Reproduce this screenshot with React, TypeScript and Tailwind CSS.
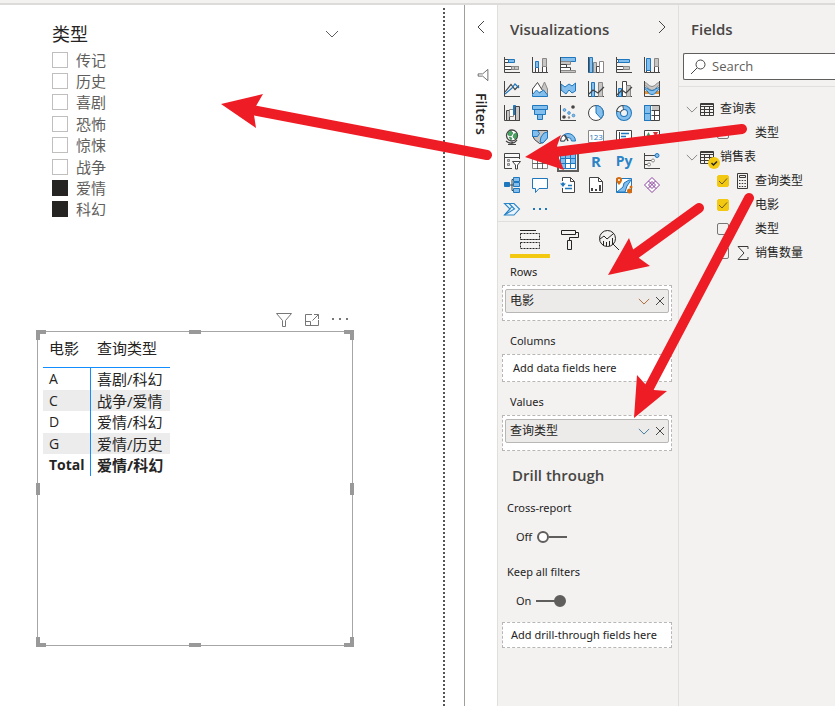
import { useId, useState } from "react";
import type { ReactNode } from "react";

const INK = "#444444";
const BLUE = "#1f77bd";
const SKY = "#83beec";
const GRAY = "#c8c6c4";
const MID = "#8a8886";

const axes = <path d="M.5 0v15.5H16" stroke={INK} fill="none" />;

const icons: { name: string; art: ReactNode; selected?: boolean }[] = [
  { name: "Stacked bar chart", art: <>{axes}<path d="M.5 2.5h5v3h-5z" fill="#fff" stroke={INK} /><path d="M4.500 2.500h6v3h-6z" fill={SKY} stroke={BLUE} /><path d="M.5 9.500h10v3H.5z" fill="#fff" stroke={INK} /><path d="M10.500 9.500h4v3h-4zM7.500 9.500h7v3h-7z" fill={GRAY} stroke={MID} /></> },
  { name: "Stacked column chart", art: <>{axes}<path d="M3.500 10.500h3v5h-3z" fill="#fff" stroke={INK} /><path d="M3.500 4.500h3v6h-3z" fill={SKY} stroke={BLUE} /><path d="M10.500 9.500h4v6h-4z" fill="#fff" stroke={INK} /><path d="M10.500 1.500h4v8h-4z" fill={GRAY} stroke={MID} /></> },
  { name: "Clustered bar chart", art: <><path d="M.5.5h15v4H.5z" fill={SKY} stroke={BLUE} /><path d="M.5 4.500h10v3H.5z" fill={GRAY} stroke={MID} /><path d="M.5 7.500h6v3h-6z" fill="#fff" stroke={INK} /><path d="M.5 10.500h10v3H.5z" fill="#fff" stroke={INK} /><path d="M.5 13.500h15v2H.5z" fill={GRAY} stroke={MID} /><path d="M.5 0v16" stroke={INK} /></> },
  { name: "Clustered column chart", art: <>{axes}<path d="M1.500.5h3v15h-3z" fill={SKY} stroke={BLUE} /><path d="M5.500 5.500h3v10h-3z" fill={GRAY} stroke={MID} /><path d="M8.500 9.500h3v6h-3z" fill="#fff" stroke={INK} /><path d="M11.500 4.500h4v11h-4z" fill="#fff" stroke={MID} /></> },
  { name: "100% stacked bar chart", art: <>{axes}<path d="M.5 2.500h2v3h-2zM.5 9.500h7v3h-7z" fill="#fff" stroke={INK} /><path d="M2.500 2.500h11v3h-11z" fill={SKY} stroke={BLUE} /><path d="M7.500 9.500h6v3h-6z" fill={GRAY} stroke={MID} /></> },
  { name: "100% stacked column chart", art: <>{axes}<path d="M2.500 12.500h4v3h-4zM10.500 9.500h4v6h-4z" fill="#fff" stroke={INK} /><path d="M2.500 1.500h4v12h-4z" fill={SKY} stroke={BLUE} /><path d="M10.500 1.500h4v8h-4z" fill={GRAY} stroke={MID} /></> },
  { name: "Line chart", art: <>{axes}<g fill="none" strokeWidth="1.2"><path d="M1 11 7 3.500l4 5 4-4" stroke={INK} /><path d="M1 13l7-6 3-4 4 4" stroke={BLUE} /></g></> },
  { name: "Area chart", art: <><path d="M7 13 12.500 1l3 7v7z" fill={GRAY} stroke={MID} /><path d="M.5 13V8l5-6.500 5 8" fill="#fff" stroke={INK} /><path d="M.5 15.500v-2l4-4.500 3 3 4-3 4 5v1.500z" fill={SKY} stroke={BLUE} /></> },
  { name: "Stacked area chart", art: <><path d="M1 3l4 3 4-3 3 2 3.500-3v8L12 12l-3-3-3 4-5-4z" fill={SKY} stroke={BLUE} />{axes}</> },
  { name: "Line and stacked column chart", art: <>{axes}<path d="M3.500 1.500h3v14h-3z" fill={SKY} stroke={BLUE} /><path d="M10.500 1.500h4v14h-4z" fill={GRAY} stroke={MID} /><path d="M1 13l4-4 5 3 6-6" fill="none" stroke={INK} strokeWidth="1.2" /></> },
  { name: "Line and clustered column chart", art: <>{axes}<path d="M2.500 7.500h3v8h-3z" fill={SKY} stroke={BLUE} /><path d="M6.500.5h4v15h-4z" fill="#fff" stroke={INK} /><path d="M10.500 4.500h4v11h-4z" fill={GRAY} stroke={MID} /><path d="M1 14l5-5 4 3 6-6" fill="none" stroke={INK} strokeWidth="1.2" /></> },
  { name: "Ribbon chart", art: <><path d="M1 11.500h4l3-2 3 2h4" fill="none" stroke="#e8912d" strokeWidth="3" /><path d="M.5 1.500c3 0 4 4 7.500 4s4-4 7.500-4v3c-3 0-4 5-7.500 5s-4-5-7.500-5z" fill={GRAY} stroke={MID} /><path d="M.5 6.500c3 0 4 3 7.500 3s4-3 7.500-3v2c-3 0-3 5-7.500 5s-4-5-7.500-5z" fill={SKY} stroke={BLUE} /><path d="M.5 0v15.500h15V0" fill="none" stroke={INK} /></> },
  { name: "Waterfall chart", art: <>{axes}<path d="M2.500 5.500h3v10h-3z" fill={GRAY} stroke={INK} /><path d="M5.500 4.500h4v7h-4z" fill="#fff" stroke={MID} /><path d="M9.500.5h2v9h-2z" fill={BLUE} stroke={BLUE} /><path d="M11.500 1.500h4v14h-4z" fill={GRAY} stroke={INK} /></> },
  { name: "Funnel", art: <g fill={SKY} stroke={BLUE}><path d="M.5.5h15v4H.5zM2.500 4.500h11v5h-11zM5.500 9.500h5v5h-5z" /></g> },
  { name: "Scatter chart", art: <>{axes}<g fill={SKY} stroke={BLUE} strokeWidth=".6"><circle cx="4.500" cy="5" r="1.400" /><circle cx="9" cy="8" r="1.400" /><circle cx="13.500" cy="10.500" r="1.400" /></g><g fill={INK}><circle cx="13" cy="2" r="1.800" /><circle cx="4" cy="12" r="1.800" /></g><circle cx="9" cy="12.500" r="1.200" fill={MID} /></> },
  { name: "Pie chart", art: <><circle cx="8" cy="8" r="7.500" fill="#fff" stroke={INK} /><path d="M8 .5V8l5 5.500A7.500 7.500 0 0 0 8 .5z" fill={SKY} stroke={BLUE} /></> },
  { name: "Donut chart", art: <><circle cx="8" cy="8" r="5.500" fill="none" stroke={BLUE} strokeWidth="5" /><circle cx="8" cy="8" r="5.500" fill="none" stroke={SKY} strokeWidth="3" /><path d="M2.500 7a5.500 5.500 0 0 1 5-4.500" fill="none" stroke={INK} strokeWidth="5" /><path d="M2.700 6.200A5.500 5.500 0 0 1 6.700 2.600" fill="none" stroke="#fff" strokeWidth="3.200" /></> },
  { name: "Treemap", art: <><path d="M.5.5h15v15H.5z" fill="#fff" stroke={INK} /><path d="M.5.5h6v8h-6zM.5 8.500h6v7h-6z" fill={SKY} stroke={BLUE} /><path d="M8 1h7v4H8z" fill={GRAY} /><path d="M7.500 5.500h8M10.500 5.500v10M7.500 10.500h8" stroke={INK} /></> },
  { name: "Map", art: <><circle cx="8" cy="6.500" r="5.500" fill="#fff" stroke={INK} strokeWidth="1.300" /><path d="M4 3.500 7 2l2 2-2 3-3-1zM10 5l3-1v4l-2 2-2-2zM5 8l3 1-1 2z" fill="#4aa564" stroke="#2b7a43" strokeWidth=".6" /><path d="M2 12c4 3 8 3 11-1M8 13v2.500M4 15.500h8" fill="none" stroke={INK} strokeWidth="1.200" /></> },
  { name: "Filled map", art: <><path d="M.5 1.500h15v7l-4 5-4 1-5-4-2-4z" fill={GRAY} stroke={INK} /><path d="M.5 1.500h5l2 3-2 3h-5zM9 8l3-4 3.500-1v6L11 14l-3-1z" fill={SKY} stroke={BLUE} /></> },
  { name: "Gauge", art: <><path d="M.5 12a7.500 7.500 0 0 1 15 0h-4a3.500 3.500 0 0 0-7 0z" fill={SKY} stroke={BLUE} /><path d="M.5 12a7.500 7.500 0 0 1 3-6l3 3a4 4 0 0 0-2 3z" fill="#fff" stroke={INK} /><path d="m5 6 3 6" stroke={INK} strokeWidth="1.500" /></> },
  { name: "Card", art: <><path d="M.5 1.500h15v12H.5z" fill="#fff" stroke={MID} /><text x="8" y="11" textAnchor="middle" fontSize="8" fill={BLUE}>123</text></> },
  { name: "Multi-row card", art: <><path d="M.5 1.500h15v12H.5z" fill="#fff" stroke={INK} /><path d="M3.500 3v9" stroke={INK} /><path d="M5 4.500h8M5 7.500h5M5 10.500h7" stroke={BLUE} strokeWidth="1.500" /></> },
  { name: "KPI", art: <><path d="M.5 1.500h15v12H.5z" fill="#fff" stroke={INK} /><path d="m2 8 2.500-5L7 8z" fill="#3a9a5b" /><path d="m9 3 5 0-2.500 5z" fill="#d13438" /><path d="M3 11.500h10" stroke={MID} /></> },
  { name: "Slicer", art: <><path d="M.5.500h15v15H.5z" fill="#f8f8f8" /><path d="M15.500 6V.5H.5v15H8M0 4.500h16" fill="none" stroke={INK} /><path d="M3.500 6.500h2v2h-2zM3.500 10.500h2v2h-2z" fill={GRAY} stroke={MID} /><path d="M8.500 8.500h8l-3 3.500v4h-2v-4z" fill="#fff" stroke={INK} /></> },
  { name: "Table", art: <><path d="M.5.500h15v15H.5z" fill="#fff" stroke={MID} /><path d="M1 1h14v3H1z" fill={GRAY} /><path d="M.5 4.500h15M.5 10.500h15M5.500 4v12M10.500 4v12" stroke={INK} strokeWidth=".8" /></> },
  { name: "Matrix", selected: true, art: <><path d="M.5.500h15v15H.5z" fill="#fff" stroke={BLUE} /><path d="M1 1h14v4H1zM1 5h4v10H1zM11 5h4v6h-4z" fill={SKY} /><path d="M.5 5.500h15M.5 10.500h15M5.500 0v16M10.500 0v16" stroke={BLUE} /></> },
  { name: "R script visual", art: <text x="8" y="14" textAnchor="middle" fontSize="15" fontWeight="700" fill="#2b84c6">R</text> },
  { name: "Python visual", art: <text x="8" y="13" textAnchor="middle" fontSize="14" fontWeight="700" fill="#2b84c6">Py</text> },
  { name: "Key influencers", art: <><path d="M.5 0v15.500H16M1 2.500h11M1 7.500h8M1 11.500h3" stroke={INK} fill="none" /><circle cx="13" cy="2.500" r="2" fill={SKY} stroke={BLUE} /><circle cx="9" cy="7.500" r="1.500" fill="#fff" stroke={MID} /><circle cx="5" cy="11.500" r="1.500" fill="#fff" stroke={MID} /></> },
  { name: "Decomposition tree", art: <><path d="M5 8h4M9.500 2.500H8v11h2" fill="none" stroke={INK} /><path d="M.5 5.500h5v4h-5z" fill={BLUE} stroke={BLUE} /><path d="M9.500.500h6v4h-6zM9.500 5.500h6v4h-6zM9.500 11.500h6v4h-6z" fill={SKY} stroke={BLUE} /></> },
  { name: "Q&A", art: <path d="M.5 1.500h15v10H7l-3.500 4v-4h-3z" fill="#fff" stroke={BLUE} /> },
  { name: "Smart narrative", art: <><path d="M2.500 4V.500h8l4 4v11h-12V11" fill="#fff" stroke={INK} /><path d="M10.500.500v4h4" fill="none" stroke={INK} /><path d="M8 8.500h4M5 11.500h7" stroke={BLUE} strokeWidth="1.300" /><path d="M0 6.500h1.500L3 5l1.500 1.500H6L4.500 8 3 10 1.500 8z" fill={BLUE} /></> },
  { name: "Paginated report", art: <><path d="M1.500.500h9l4 4v11h-13z" fill="#fff" stroke={INK} /><path d="M10.500.500v4h4" fill="none" stroke={INK} /><path d="M4 11v3M8 12v2M12 8v6" stroke={INK} strokeWidth="2" /></> },
  { name: "ArcGIS map", art: <><path d="M.5 1.500h15v14H.5z" fill="#fff" stroke={BLUE} /><path d="M1 15 7 10l1-4 5-3h2l-4 6-2 6z" fill={SKY} stroke={BLUE} /><path d="M3 0a3 3 0 0 1 3 3c0 2-3 5-3 5S0 5 0 3a3 3 0 0 1 3-3z" fill="#d96b0b" /><circle cx="3" cy="3" r="1" fill="#fff" /><circle cx="13.500" cy="14" r="2.500" fill="#d96b0b" /><circle cx="15" cy="10" r="1.500" fill="#d96b0b" /></> },
  { name: "Power Apps", art: <g fill="none" stroke="#8b3f9e"><path d="M8 .5 15.500 8 8 15.500.5 8z" fill="#fff" /><path d="m4.500 4 7.500 7.500M11.500 4 4 11.500M8 4.500 4.500 8 8 11.500 11.500 8z" /></g> },
  { name: "Power Automate", art: <g fill="#e9f4fc" stroke="#2b84c6" strokeWidth="1.100"><path d="M.5 2.500h9.500l5.500 5.500-5.500 6H.5L6 8z" /><path d="M5 2.500 10.500 8 .5 14M8 5.500.5 14" fill="none" /></g> },
  { name: "More visuals", art: <g fill={BLUE}><path d="M1 7h2v2H1zM7 7h2v2H7zM13 7h2v2h-2z" /></g> },
];

function Chevron({ className }: { className: string }) {
  return (
    <svg className={className} viewBox="0 0 14 8" fill="none" stroke="currentColor">
      <path d="m1 1 6 6 6-6" />
    </svg>
  );
}

function SideChevron({ left }: { left?: boolean }) {
  return (
    <svg className="h-3 w-2" viewBox="0 0 8 12" fill="none" stroke="#484644">
      <path d={left ? "M7 0 1 6l6 6" : "m1 0 6 6-6 6"} />
    </svg>
  );
}

function Funnel({ className }: { className: string }) {
  return (
    <svg className={className} viewBox="0 0 16 16" fill="none" stroke="currentColor">
      <path d="M.5 1.500h15l-6 7v6h-3v-6z" />
    </svg>
  );
}

function Slicer() {
  const [picked, setPicked] = useState(["爱情", "科幻"]);
  const toggle = (g: string) => setPicked((p) => (p.includes(g) ? p.filter((x) => x !== g) : [...p, g]));
  return (
    <section className="mr-[104px] ml-[15px] text-[#605e5c]">
      <div className="flex h-[30px] items-center justify-between">
        <h2 className="text-lg text-[#252423]">类型</h2>
        <button aria-label="Collapse"><Chevron className="h-2 w-3.5" /></button>
      </div>
      <div className="flex h-[171px] flex-col">
        {["传记", "历史", "喜剧", "恐怖", "惊悚", "战争", "爱情", "科幻"].map((g) => (
          <label key={g} className="flex flex-1 items-center gap-2 text-[15px] leading-5">
            <input type="checkbox" checked={picked.includes(g)} onChange={() => toggle(g)} className="size-4 appearance-none border border-[#c0bfbe] checked:border-[#252423] checked:bg-[#252423]" />
            {g}
          </label>
        ))}
      </div>
    </section>
  );
}

const handles = [
  "-left-0.5 -top-0.5 h-1 w-2.5", "-left-0.5 -top-0.5 h-2.5 w-1",
  "-right-0.5 -top-0.5 h-1 w-2.5", "-right-0.5 -top-0.5 h-2.5 w-1",
  "-left-0.5 -bottom-0.5 h-1 w-2.5", "-left-0.5 -bottom-0.5 h-2.5 w-1",
  "-right-0.5 -bottom-0.5 h-1 w-2.5", "-right-0.5 -bottom-0.5 h-2.5 w-1",
  "left-1/2 -ml-1.5 -top-0.5 h-1 w-3", "left-1/2 -ml-1.5 -bottom-0.5 h-1 w-3",
  "top-1/2 -mt-1.5 -left-0.5 h-3 w-1", "top-1/2 -mt-1.5 -right-0.5 h-3 w-1",
];

function Matrix() {
  const rows = [["A", "喜剧/科幻"], ["C", "战争/爱情"], ["D", "爱情/科幻"], ["G", "爱情/历史"]];
  return (
    <section className="mt-[89px] mr-[90px]">
      <div className="flex h-[22px] items-center justify-end gap-3 pr-[5px] text-[#797775]">
        <button aria-label="Filters"><Funnel className="size-4" /></button>
        <button aria-label="Focus mode">
          <svg className="size-4" viewBox="0 0 16 16" fill="none" stroke="currentColor">
            <path d="M8 2.500H1.500v11h13V8M1.500 9.500h5v4M10 2.500h4.500V7M14.500 2.500l-6 6" />
          </svg>
        </button>
        <button aria-label="More options">
          <svg className="size-4" viewBox="0 0 16 16" fill="currentColor"><path d="M0 6h2v2H0zM7 6h2v2H7zM14 6h2v2h-2z" /></svg>
        </button>
      </div>
      <div className="relative h-[315px] border border-[#a6a6a6] pt-1 pl-[5px]">
        {handles.map((h) => <span key={h} className={`absolute bg-[#999999] ${h}`} />)}
        <table className="border-separate border-spacing-0 text-[15px] leading-5 text-[#252423]">
          <thead>
            <tr className="h-8 text-left align-top">
              <th className="w-12 border-b border-[#118dff] pl-1.5 pt-0.5 font-normal">电影</th>
              <th className="w-[79px] border-b border-[#118dff] pl-1.5 pt-0.5 font-normal">查询类型</th>
            </tr>
          </thead>
          <tbody>
            {rows.map(([k, v]) => (
              <tr key={k} className="odd:h-[22px] even:h-[21px] even:bg-[#ececec]">
                <td className="border-r border-[#118dff] pl-1.5 text-sm">{k}</td>
                <td className="pl-1.5">{v}</td>
              </tr>
            ))}
            <tr className="h-[22px] font-bold">
              <td className="border-r border-[#118dff] pl-1.5 text-sm">Total</td>
              <td className="pl-1.5">爱情/科幻</td>
            </tr>
          </tbody>
        </table>
      </div>
    </section>
  );
}

function Well({ label, field, warm }: { label: string; field?: string; warm?: boolean }) {
  return (
    <section>
      <h3 className="flex h-[25px] items-center pl-2">{label}</h3>
      {field ? (
        <div className="h-9 border border-dashed border-[#b9b7b5] bg-white px-0.5 pt-[3px]">
          <div className="flex h-6 items-center gap-1.5 rounded-xs border border-[#b9b7b5] bg-[#edebe9] px-1 text-xs">
            <span className="flex-1">{field}</span>
            <button aria-label={`${field} options`} className={warm ? "text-[#a4561f]" : "text-[#2b6a94]"}><Chevron className="h-[7px] w-3" /></button>
            <button aria-label={`Remove ${field}`}>
              <svg className="size-2" viewBox="0 0 8 8" stroke="#484644"><path d="m0 0 8 8M8 0 0 8" /></svg>
            </button>
          </div>
        </div>
      ) : (
        <div className="flex h-7 items-center border border-dashed border-[#b9b7b5] bg-white pl-2.5">Add data fields here</div>
      )}
    </section>
  );
}

function Toggle({ label, initial }: { label: string; initial: boolean }) {
  const [on, setOn] = useState(initial);
  const id = useId();
  return (
    <div className="pl-[5px]">
      <label htmlFor={id} className="flex h-[18px] items-center">{label}</label>
      <div className="mt-2 flex h-6 items-center pl-[9px]">
        <span className={on ? "w-5" : "w-[21px]"}>{on ? "On" : "Off"}</span>
        <span className="grid">
          <input id={id} type="checkbox" role="switch" checked={on} onChange={() => setOn(!on)} className="h-3 w-[31px] appearance-none [grid-area:1/1]" />
          <svg className="pointer-events-none h-3 w-[31px] [grid-area:1/1]" viewBox="0 0 31 12" stroke="#605e5c" strokeWidth="2">
            <path d={on ? "M0 6h20" : "M12 6h18"} />
            <circle cx={on ? 24 : 6} cy="6" r="5" fill={on ? "#605e5c" : "#fff"} />
          </svg>
        </span>
      </div>
    </div>
  );
}

function Visualizations() {
  return (
    <aside className="w-[181px] shrink-0 border-l border-[#e1dfdd] text-[11px]">
      <div className="flex h-12 items-center justify-between pr-3 pl-3">
        <h2 className="text-[15px] font-semibold text-[#484644]">Visualizations</h2>
        <button aria-label="Collapse pane" className="mb-1"><SideChevron /></button>
      </div>
      <div className="grid auto-rows-[24px] grid-cols-[repeat(6,28px)] border-b border-[#e1dfdd]">
        {icons.map((i) => (
          <button key={i.name} aria-label={i.name} className="flex items-center justify-center">
            <span className={i.selected ? "border-2 border-[#605e5c] p-px" : ""}>
              <svg className="block size-4 overflow-visible" viewBox="0 0 16 16">{i.art}</svg>
            </span>
          </button>
        ))}
      </div>
      <div className="flex h-[38px] items-start gap-5 pl-3 text-[#252423]">
        <button aria-label="Fields" className="flex w-10 flex-col items-center border-b-4 border-[#f2c811] pt-2">
          <svg className="mb-1 h-5 w-5" viewBox="0 0 20 20" fill="none" stroke="currentColor">
            <path d="M0 .500h16" /><path d="M.5 3.500h19v6H.5zM.5 9.500h19M.5 12.500h19v6H.5z" strokeDasharray="2 1" />
          </svg>
        </button>
        <button aria-label="Format" className="-ml-[9px] pt-2">
          <svg className="h-5 w-[18px]" viewBox="0 0 18 20" fill="none" stroke="currentColor">
            <path d="M.5.500h14v4H.5zM14.500 2.500h3v5h-9v3M6.500 10.500h4v9h-4z" />
          </svg>
        </button>
        <button aria-label="Analytics" className="pt-2">
          <svg className="size-5" viewBox="0 0 20 20" fill="none" stroke="currentColor">
            <circle cx="8.500" cy="8.500" r="8" /><path d="m14 14 6 6M1 9l4-3 3 3 6-5M4.500 16v-5M7.500 16v-4M10.500 16v-5M13.500 14V8" />
          </svg>
        </button>
      </div>
      <div className="mr-1.5 ml-1 flex flex-col gap-2 font-['Noto_Sans','Noto_Sans_CJK_SC',sans-serif] text-[#252423]">
        <Well label="Rows" field="电影" warm />
        <Well label="Columns" />
        <Well label="Values" field="查询类型" />
      </div>
      <h2 className="flex h-12 items-center pl-3.5 text-[15px] font-semibold text-[#484644]">Drill through</h2>
      <div className="mr-1.5 ml-1 font-['Noto_Sans','Noto_Sans_CJK_SC',sans-serif] text-[#252423]">
        <div className="flex flex-col gap-3.5">
          <Toggle label="Cross-report" initial={false} />
          <Toggle label="Keep all filters" initial />
        </div>
        <div className="mt-[9px] flex h-[26px] items-center border border-dashed border-[#b9b7b5] bg-white pl-2 whitespace-nowrap">Add drill-through fields here</div>
      </div>
    </aside>
  );
}

function TableGlyph() {
  return (
    <svg className="h-[13px] w-3.5" viewBox="0 0 14 13" fill="none" stroke="#3b3a39">
      <path d="M.5.500h13v12H.5zM0 3.500h14M0 6.500h14M0 9.500h14M4.500 3v10M9.500 3v10M0 1.500h14" />
    </svg>
  );
}

function TableRow({ name, used }: { name: string; used?: boolean }) {
  return (
    <div className="flex h-6 items-center pl-[7px]">
      <button aria-label={`Collapse ${name}`} className="mr-0.5 text-[#797775]"><Chevron className="h-[7px] w-3" /></button>
      <span className="relative mr-1.5">
        <TableGlyph />
        {used && (
          <svg className="absolute top-1.5 left-2 size-3" viewBox="0 0 12 12">
            <circle cx="6" cy="6" r="6" fill="#f2c811" /><path d="m3.500 6 2 2 3.500-3.500" fill="none" stroke="#252423" strokeWidth="1.500" />
          </svg>
        )}
      </span>
      {name}
    </div>
  );
}

function FieldRow({ name, on = false, icon }: { name: string; on?: boolean; icon?: ReactNode }) {
  const [checked, setChecked] = useState(on);
  return (
    <label className="flex h-6 items-center pl-[38px]">
      <span className="grid">
        <input type="checkbox" checked={checked} onChange={() => setChecked(!checked)} className="size-3 appearance-none rounded-xs border border-[#797775] [grid-area:1/1] checked:border-[#f2c811] checked:bg-[#f2c811]" />
        {checked && (
          <svg className="pointer-events-none size-3 [grid-area:1/1]" viewBox="0 0 12 12" fill="none" stroke="#6b5a10"><path d="m2 6 3 3 5-5.500" /></svg>
        )}
      </span>
      <span className="ml-2 flex w-[18px] items-center">{icon}</span>
      {name}
    </label>
  );
}

function Fields() {
  return (
    <aside className="w-[157px] shrink-0 overflow-hidden border-l border-[#e1dfdd] text-xs text-[#252423]">
      <h2 className="flex h-12 items-center pl-3 text-[15px] font-semibold text-[#484644]">Fields</h2>
      <div className="ml-1 flex h-[27px] items-center gap-1.5 rounded-l-xs border border-r-0 border-[#605e5c] bg-white pl-[7px]">
        <svg className="size-[15px] shrink-0" viewBox="0 0 15 15" fill="none" stroke="#484644"><circle cx="9.500" cy="5.500" r="4.500" /><path d="m6 9-6 6" /></svg>
        <input aria-label="Search" placeholder="Search" className="w-full min-w-0 text-[13px] outline-none placeholder:text-[#605e5c]" />
      </div>
      <div className="mt-1.5 border-t border-[#e1dfdd] pt-2.5">
        <TableRow name="查询表" />
        <FieldRow name="类型" />
        <TableRow name="销售表" used />
        <FieldRow name="查询类型" on icon={
          <svg className="h-4 w-3" viewBox="0 0 12 16" fill="none" stroke="#3b3a39"><path d="M.5.500h10v15H.5zM2.500 2.500h6v2h-6z" /><path d="M2 7.500h7M2 10.500h7M2 13.500h7" strokeDasharray="1.500 1.200" /></svg>
        } />
        <FieldRow name="电影" on />
        <FieldRow name="类型" />
        <FieldRow name="销售数量" icon={
          <svg className="h-3.5 w-3" viewBox="0 0 12 14" fill="none" stroke="#3b3a39"><path d="M11 3V.500H1L7 7l-6 6.500h10V11" /></svg>
        } />
      </div>
    </aside>
  );
}

function Arrows() {
  return (
    <svg className="pointer-events-none absolute top-0 left-0 h-[706px] w-[835px]" viewBox="0 0 835 706" fill="#ee1c24">
      <g stroke="#ee1c24" strokeWidth="10" strokeLinecap="round">
        <path d="M252 110 487 155M555 152 742 129M634 255 699 208M649 388 749 198" />
      </g>
      <path d="m221 104 42-10-7 12-2 9 2 13zM525 157l36-22-4 11 1 10 6 14zM608 275l21-37 4 11 6 9 11 8zM634 418l3-43 9 10 8 5 13 1z" />
    </svg>
  );
}

export default function App() {
  return (
    <div className="relative flex min-h-screen flex-col overflow-hidden bg-[#f3f2f1] font-['Open_Sans','Noto_Sans_CJK_SC',sans-serif]">
      <header className="h-[5px] border-b-2 border-[#dddbda]" />
      <div className="flex flex-1">
        <div className="flex min-w-0 flex-1 bg-white pr-[19px]">
          <main className="mt-[3px] flex-1 border-r-2 border-dotted border-[#555555] pt-[11px] pl-[37px]">
            <Slicer />
            <Matrix />
          </main>
        </div>
        <aside className="flex w-[33px] shrink-0 flex-col items-center border-l border-[#a19f9d] bg-white pt-4">
          <button aria-label="Expand filters"><SideChevron left /></button>
          <Funnel className="mt-9 ml-1 size-3 rotate-90 text-[#484644]" />
          <h2 className="mt-3 text-sm font-semibold text-[#252423] [writing-mode:vertical-rl]">Filters</h2>
        </aside>
        <Visualizations />
        <Fields />
      </div>
      <Arrows />
    </div>
  );
}
